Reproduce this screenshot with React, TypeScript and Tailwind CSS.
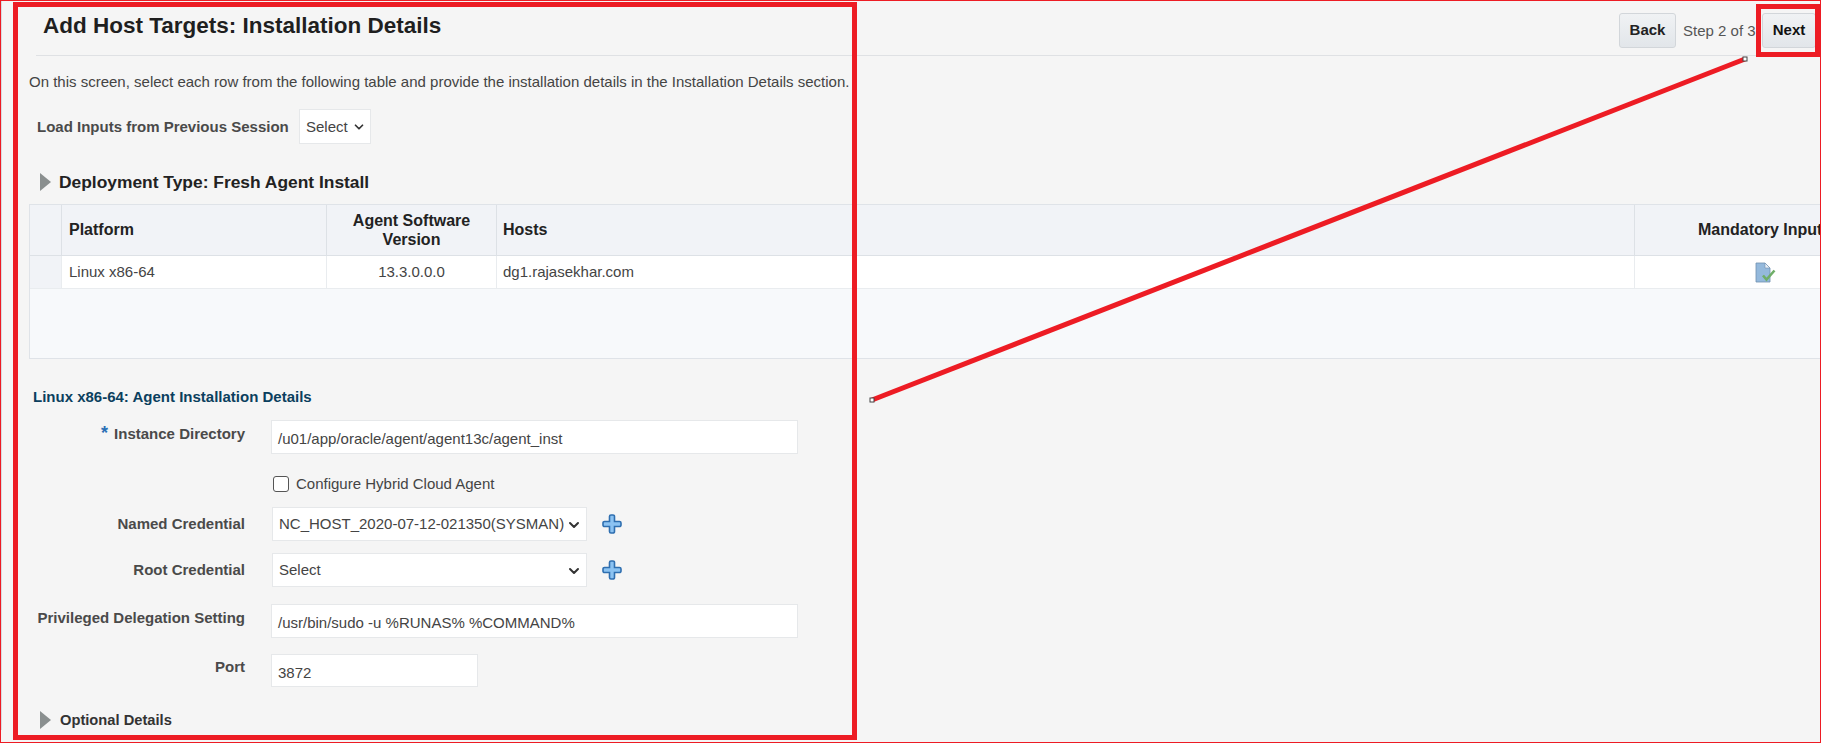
import React from 'react'
import { ChevronDown } from 'lucide-react'

function Triangle() {
  return (
    <svg width="12" height="18" viewBox="0 0 12 18" className="flex-none">
      <polygon points="0,0 11,9 0,18" fill="#8a8f8f" />
    </svg>
  )
}

function PlusIcon() {
  return (
    <svg width="20" height="20" viewBox="0 0 20 20" className="flex-none">
      <path
        d="M7.5 2.5a1.5 1.5 0 0 1 1.5-1.5h2a1.5 1.5 0 0 1 1.5 1.5v5h5a1.5 1.5 0 0 1 1.5 1.5v2a1.5 1.5 0 0 1-1.5 1.5h-5v5a1.5 1.5 0 0 1-1.5 1.5h-2a1.5 1.5 0 0 1-1.5-1.5v-5h-5a1.5 1.5 0 0 1-1.5-1.5v-2a1.5 1.5 0 0 1 1.5-1.5h5z"
        fill="#8cc3f2"
        stroke="#2f6fb0"
        strokeWidth="1.6"
      />
    </svg>
  )
}

function DocCheckIcon() {
  return (
    <svg width="21" height="21" viewBox="0 0 21 21">
      <path d="M1 1h9l5 5v14H1z" fill="#94b9dc" stroke="#6f8fae" strokeWidth="0.8" />
      <path d="M10 1v5h5z" fill="#e8f0f7" stroke="#6f8fae" strokeWidth="0.6" />
      <path d="M8 13.5l3.5 4 8-9" fill="none" stroke="#6fae68" strokeWidth="2.6" />
    </svg>
  )
}

function FormLabel({ children, className }: { children: React.ReactNode, className?: string }) {
  return (
    <div className={`w-[245px] flex-none text-right text-[15px] font-bold leading-[20px] text-[#4a4a4a] ${className ?? ''}`}>
      {children}
    </div>
  )
}

function TextBox({ value, width }: { value: string, width: string }) {
  return (
    <div className={`${width} h-full bg-white border border-[#e6e8ea] px-[6px] pt-[8px] text-[15px] leading-[20px] text-[#444]`}>
      {value}
    </div>
  )
}

function SelectBox({ value }: { value: string }) {
  return (
    <div className="w-[315px] h-[34px] flex items-center justify-between bg-white border border-[#e6e8ea] pl-[6px] pr-[4px] pt-[1px] text-[15px] text-[#444] whitespace-nowrap">
      <span>{value}</span>
      <ChevronDown size={16} strokeWidth={3} color="#333" className="flex-none" />
    </div>
  )
}

export default function App() {
  return (
    <div className="relative w-[1821px] h-[743px] overflow-hidden bg-[#f5f5f5] font-['Liberation_Sans',Arial,sans-serif] text-[15px] text-[#333]">
      <div className="pt-[6px] border-l border-[#d8dbe0] ml-[1px] -mr-[1px]">
        {/* page header */}
        <header className="h-[50px] ml-[34px] mr-[4px] flex justify-between border-t border-b border-[#dfe1e4] border-t-transparent">
          <h1 className="pl-[7px] pt-[5px] text-[22.5px] leading-[28px] font-bold text-[#1f1f1f] whitespace-nowrap">
            Add Host Targets: Installation Details
          </h1>
          <div className="flex items-start pt-[6px] gap-[7px] pr-[2px]">
            <button className="w-[57px] h-[35px] rounded-[3px] border border-[#d2d6da] bg-gradient-to-b from-[#f0f2f4] to-[#e2e6ea] text-[15px] font-bold text-[#222]">Back</button>
            <span className="w-[72px] leading-[35px] text-[15px] whitespace-nowrap text-[#555]">Step 2 of 3</span>
            <button className="w-[54px] h-[35px] rounded-[3px] border border-[#d2d6da] bg-gradient-to-b from-[#f0f2f4] to-[#e2e6ea] text-[15px] font-bold text-[#111]">Next</button>
          </div>
        </header>

        <p className="mt-[16px] pl-[27px] text-[15px] leading-[20px] text-[#444] whitespace-nowrap">
          On this screen, select each row from the following table and provide the installation details in the Installation Details section.
        </p>

        <div className="mt-[17px] pl-[35px] flex items-center gap-[10px] h-[35px]">
          <span className="w-[252px] pt-[1px] font-bold text-[#4a4a4a] whitespace-nowrap">Load Inputs from Previous Session</span>
          <div className="w-[72px] h-full flex items-center justify-between bg-white border border-[#e6e8ea] pl-[6px] pr-[4px] pt-[1px] text-[#444]">
            <span>Select</span>
            <ChevronDown size={14} strokeWidth={3} color="#333" />
          </div>
        </div>

        <div className="mt-[28px] pl-[38px] flex items-center gap-[7px] h-[20px]">
          <Triangle />
          <h2 className="text-[17.4px] font-bold text-[#222] whitespace-nowrap">Deployment Type: Fresh Agent Install</h2>
        </div>

        {/* deployment table, runs off the right edge */}
        <div className="mt-[12px] ml-[27px] w-[1800px] h-[155px] border border-[#dfe3e8] bg-[#f7f9fb] overflow-hidden">
          <div className="grid grid-cols-[32px_265px_170px_1138px_236px] h-[51px] bg-[#f1f3f7] border-b border-[#dde1e6] text-[16px] font-bold text-[#222]">
            <div className="border-r border-[#dde1e6]" />
            <div className="border-r border-[#dde1e6] pl-[7px] flex items-center">Platform</div>
            <div className="border-r border-[#dde1e6] flex items-center justify-center text-center leading-[19px]">Agent Software<br />Version</div>
            <div className="border-r border-[#dde1e6] pl-[6px] flex items-center">Hosts</div>
            <div className="pl-[63px] flex items-center whitespace-nowrap">Mandatory Input</div>
          </div>
          <div className="grid grid-cols-[32px_265px_170px_1138px_236px] h-[33px] bg-white border-b border-[#e9ecef] text-[15px] text-[#444]">
            <div className="border-r border-[#e9ecef] bg-[#f1f3f7]" />
            <div className="border-r border-[#e9ecef] pl-[7px] flex items-center">Linux x86-64</div>
            <div className="border-r border-[#e9ecef] flex items-center justify-center">13.3.0.0.0</div>
            <div className="border-r border-[#e9ecef] pl-[6px] flex items-center">dg1.rajasekhar.com</div>
            <div className="pl-[120px] flex items-center"><DocCheckIcon /></div>
          </div>
        </div>

        <h3 className="mt-[28px] pl-[31px] text-[15px] leading-[20px] font-bold text-[#0b3f5e]">
          Linux x86-64: Agent Installation Details
        </h3>

        {/* installation form */}
        <div className="ml-[-2px]">
          <div className="mt-[13px] flex h-[34px] gap-[26px]">
            <FormLabel className="pt-[4px]"><span className="text-[18px] leading-[14px] text-[#2a6fb5] mr-[6px]">*</span>Instance Directory</FormLabel>
            <TextBox value="/u01/app/oracle/agent/agent13c/agent_inst" width="w-[527px]" />
          </div>

          <div className="mt-[22px] ml-[273px] flex items-center gap-[7px] h-[16px]">
            <span className="w-[16px] h-[16px] bg-white border border-[#555] rounded-[3px]" />
            <span className="text-[15px] text-[#444]">Configure Hybrid Cloud Agent</span>
          </div>

          <div className="mt-[15px] flex items-center">
            <FormLabel className="-mt-[1px]">Named Credential</FormLabel>
            <div className="ml-[27px] mr-[15px]"><SelectBox value="NC_HOST_2020-07-12-021350(SYSMAN)" /></div>
            <PlusIcon />
          </div>

          <div className="mt-[12px] flex items-center">
            <FormLabel>Root Credential</FormLabel>
            <div className="ml-[27px] mr-[15px]"><SelectBox value="Select" /></div>
            <PlusIcon />
          </div>

          <div className="mt-[17px] flex h-[34px] gap-[26px]">
            <FormLabel className="pt-[4px] whitespace-nowrap">Privileged Delegation Setting</FormLabel>
            <TextBox value="/usr/bin/sudo -u %RUNAS% %COMMAND%" width="w-[527px]" />
          </div>

          <div className="mt-[16px] flex h-[33px] gap-[26px]">
            <FormLabel className="pt-[3px]">Port</FormLabel>
            <TextBox value="3872" width="w-[207px]" />
          </div>
        </div>

        <div className="mt-[23px] pl-[38px] flex items-center gap-[8px] h-[20px]">
          <Triangle />
          <span className="text-[14.7px] font-bold text-[#333]">Optional Details</span>
        </div>
      </div>

      {/* annotation layer drawn over the screenshot */}
      <div className="absolute inset-0 border border-[#ed1c24] pointer-events-none" />
      <div className="absolute left-[13px] top-[2px] w-[844px] h-[738px] border-[5px] border-[#ed1c24] pointer-events-none" />
      <div className="absolute left-[1756px] top-[4px] w-[64px] h-[53px] border-[5px] border-[#ed1c24] pointer-events-none" />
      <svg className="absolute inset-0 pointer-events-none" width="1821" height="743">
        <line x1="872" y1="400" x2="1745" y2="59" stroke="#ed1c24" strokeWidth="5" />
        <rect x="870" y="398" width="4" height="4" fill="#fff" stroke="#444" />
        <rect x="1743" y="57" width="4" height="4" fill="#fff" stroke="#444" />
      </svg>
    </div>
  )
}
